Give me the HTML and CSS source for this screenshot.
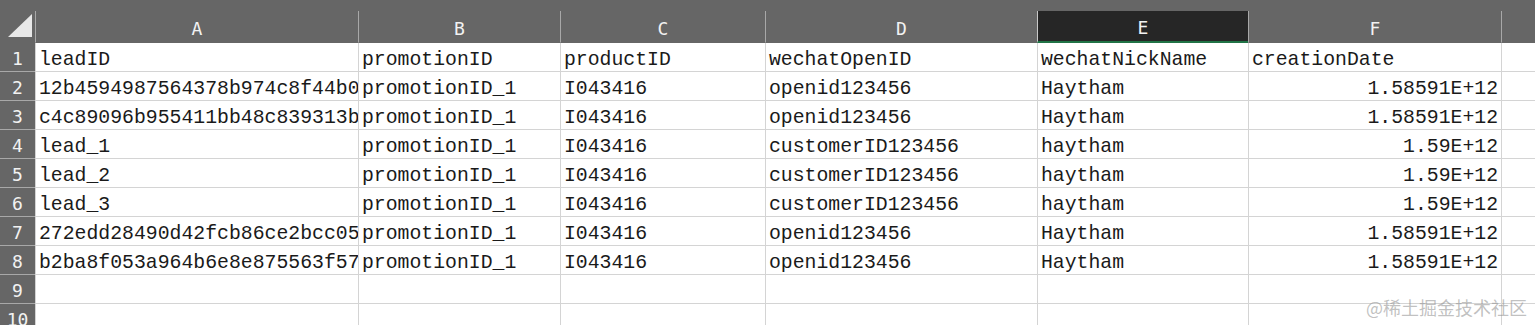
FILE: index.html
```html
<!DOCTYPE html>
<html>
<head>
<meta charset="utf-8">
<link rel="stylesheet" href="styles.css">
</head>
<body>
<div class="sheet">
  <div class="topbar"></div>
  <div class="grid">
    <div class="corner hdr"><svg class="tri" width="26" height="26" viewBox="0 0 26 26"><polygon points="1,24 25,24 25,1" fill="#e8e8e8"/></svg></div>
    <div class="hdr col">A</div>
    <div class="hdr col">B</div>
    <div class="hdr col">C</div>
    <div class="hdr col">D</div>
    <div class="hdr col sel">E</div>
    <div class="hdr col">F</div>
    <div class="hdr col last"></div>

    <div class="hdr row">1</div>
    <div class="c">leadID</div><div class="c">promotionID</div><div class="c">productID</div><div class="c">wechatOpenID</div><div class="c">wechatNickName</div><div class="c">creationDate</div><div class="c"></div>

    <div class="hdr row">2</div>
    <div class="c">12b4594987564378b974c8f44b0c</div><div class="c">promotionID_1</div><div class="c">I043416</div><div class="c">openid123456</div><div class="c">Haytham</div><div class="c num">1.58591E+12</div><div class="c"></div>

    <div class="hdr row">3</div>
    <div class="c">c4c89096b955411bb48c839313bf</div><div class="c">promotionID_1</div><div class="c">I043416</div><div class="c">openid123456</div><div class="c">Haytham</div><div class="c num">1.58591E+12</div><div class="c"></div>

    <div class="hdr row">4</div>
    <div class="c">lead_1</div><div class="c">promotionID_1</div><div class="c">I043416</div><div class="c">customerID123456</div><div class="c">haytham</div><div class="c num">1.59E+12</div><div class="c"></div>

    <div class="hdr row">5</div>
    <div class="c">lead_2</div><div class="c">promotionID_1</div><div class="c">I043416</div><div class="c">customerID123456</div><div class="c">haytham</div><div class="c num">1.59E+12</div><div class="c"></div>

    <div class="hdr row">6</div>
    <div class="c">lead_3</div><div class="c">promotionID_1</div><div class="c">I043416</div><div class="c">customerID123456</div><div class="c">haytham</div><div class="c num">1.59E+12</div><div class="c"></div>

    <div class="hdr row">7</div>
    <div class="c">272edd28490d42fcb86ce2bcc05a</div><div class="c">promotionID_1</div><div class="c">I043416</div><div class="c">openid123456</div><div class="c">Haytham</div><div class="c num">1.58591E+12</div><div class="c"></div>

    <div class="hdr row">8</div>
    <div class="c">b2ba8f053a964b6e8e875563f57a</div><div class="c">promotionID_1</div><div class="c">I043416</div><div class="c">openid123456</div><div class="c">Haytham</div><div class="c num">1.58591E+12</div><div class="c"></div>

    <div class="hdr row">9</div>
    <div class="c"></div><div class="c"></div><div class="c"></div><div class="c"></div><div class="c"></div><div class="c"></div><div class="c"></div>

    <div class="hdr row">10</div>
    <div class="c"></div><div class="c"></div><div class="c"></div><div class="c"></div><div class="c"></div><div class="c"></div><div class="c"></div>
  </div>
  <div class="watermark">@稀土掘金技术社区</div>
</div>
</body>
</html>
```

FILE: styles.css
```css
html, body {
  margin: 0;
  padding: 0;
  background: #ffffff;
}
.sheet {
  position: relative;
  width: 1535px;
  height: 325px;
  overflow: hidden;
  background: #ffffff;
}
.topbar {
  height: 11px;
  background: #666666;
}
.grid {
  display: grid;
  grid-template-columns: 35px 323px 202px 205px 272px 211px 253px 34px;
  grid-template-rows: 32px repeat(10, 29px);
}
.hdr {
  background: #666666;
  color: #f2f2f2;
  font-family: "DejaVu Sans Mono", monospace;
  font-size: 18px;
  display: flex;
  align-items: center;
  justify-content: center;
  box-sizing: border-box;
}
.col {
  border-left: 1px solid #a8a8a8;
  border-bottom: 1px solid #666666;
  padding-top: 3px;
}
.corner {
  border-bottom: 1px solid #666666;
  align-items: flex-end;
  justify-content: flex-start;
  padding: 0 0 3px 7px;
}
.tri {
  display: block;
}
.col.sel {
  background: #262626;
  border-bottom: 2px solid #217346;
  border-left-color: #c8c8c8;
}
.row {
  border-bottom: 1px solid #a8a8a8;
  padding-top: 3px;
}
.c {
  box-sizing: border-box;
  border-left: 1px solid #d4d4d4;
  border-bottom: 1px solid #d4d4d4;
  font-family: "Liberation Mono", monospace;
  font-size: 19.8px;
  color: #1a1a1a;
  white-space: nowrap;
  overflow: hidden;
  padding: 4px 0 0 3px;
  line-height: 26px;
}
.c.num {
  text-align: right;
  padding-right: 3px;
}
.watermark {
  position: absolute;
  right: 8px;
  bottom: 5px;
  font-family: "Noto Sans CJK SC", sans-serif;
  font-size: 18px;
  color: rgba(140, 140, 140, 0.55);
  letter-spacing: 0;
}
```
